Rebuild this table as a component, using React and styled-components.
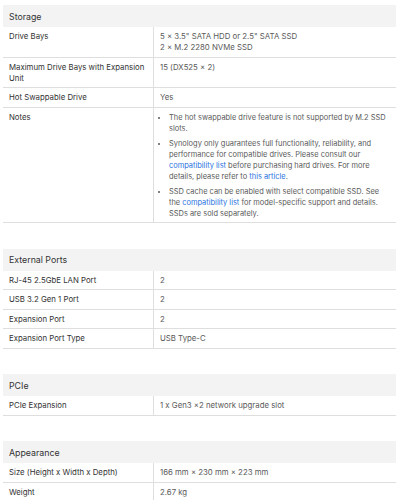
import React from "react";
import styled, { createGlobalStyle } from "styled-components";

const GlobalStyle = createGlobalStyle`
  html, body {
    overflow: hidden;
  }
  body {
    margin: 0;
    background: #fff;
    font-family: Inter, "Noto Sans", "Liberation Sans", sans-serif;
  }
`;

const Page = styled.div`
  padding: 5px 1px 0 3px;
  display: flex;
  flex-direction: column;
  gap: 25.5px;
`;

const Section = styled.section`
  display: flex;
  flex-direction: column;
`;

const Header = styled.div`
  background: #f3f3f3;
  color: #333;
  font-size: 8.8px;
  line-height: 11px;
  padding: 5.5px 6px;
`;

const Row = styled.div`
  display: grid;
  grid-template-columns: 150px 1fr;
  border-bottom: 1px solid #dedede;
  font-size: 7.8px;
  line-height: 11px;
`;

const Label = styled.div`
  color: #333;
  padding: 4px 4px 3.5px 6px;
`;

const Value = styled.div`
  color: #5a5a5a;
  padding: 4px 6px 3.5px;
  border-left: 1px solid #dedede;
`;

const Notes = styled.ul`
  margin: 0;
  padding-left: 9px;
  font-size: 7.45px;

  li {
    margin-bottom: 4px;
  }
  li:last-child {
    margin-bottom: 0;
  }
`;

const Link = styled.span`
  color: #2a73e0;
`;

const specs = [
  {
    title: "Storage",
    rows: [
      {
        label: "Drive Bays",
        value: (
          <>
            5 × 3.5" SATA HDD or 2.5" SATA SSD
            <br />2 × M.2 2280 NVMe SSD
          </>
        ),
      },
      { label: "Maximum Drive Bays with Expansion Unit", value: "15 (DX525 × 2)" },
      { label: "Hot Swappable Drive", value: "Yes" },
      {
        label: "Notes",
        value: (
          <Notes>
            <li>The hot swappable drive feature is not supported by M.2 SSD slots.</li>
            <li>
              Synology only guarantees full functionality, reliability, and performance for
              compatible drives. Please consult our <Link>compatibility list</Link> before
              purchasing hard drives. For more details, please refer to{" "}
              <Link>this article</Link>.
            </li>
            <li>
              SSD cache can be enabled with select compatible SSD. See the{" "}
              <Link>compatibility list</Link> for model-specific support and details. SSDs are
              sold separately.
            </li>
          </Notes>
        ),
      },
    ],
  },
  {
    title: "External Ports",
    rows: [
      { label: "RJ-45 2.5GbE LAN Port", value: "2" },
      { label: "USB 3.2 Gen 1 Port", value: "2" },
      { label: "Expansion Port", value: "2" },
      { label: "Expansion Port Type", value: "USB Type-C" },
    ],
  },
  {
    title: "PCIe",
    rows: [{ label: "PCIe Expansion", value: "1 x Gen3 ×2 network upgrade slot" }],
  },
  {
    title: "Appearance",
    rows: [
      { label: "Size (Height x Width x Depth)", value: "166 mm × 230 mm × 223 mm" },
      { label: "Weight", value: "2.67 kg" },
    ],
  },
];

export default function App() {
  return (
    <>
      <GlobalStyle />
      <Page>
        {specs.map((section) => (
          <Section key={section.title}>
            <Header>{section.title}</Header>
            {section.rows.map((row) => (
              <Row key={row.label}>
                <Label>{row.label}</Label>
                <Value>{row.value}</Value>
              </Row>
            ))}
          </Section>
        ))}
      </Page>
    </>
  );
}
